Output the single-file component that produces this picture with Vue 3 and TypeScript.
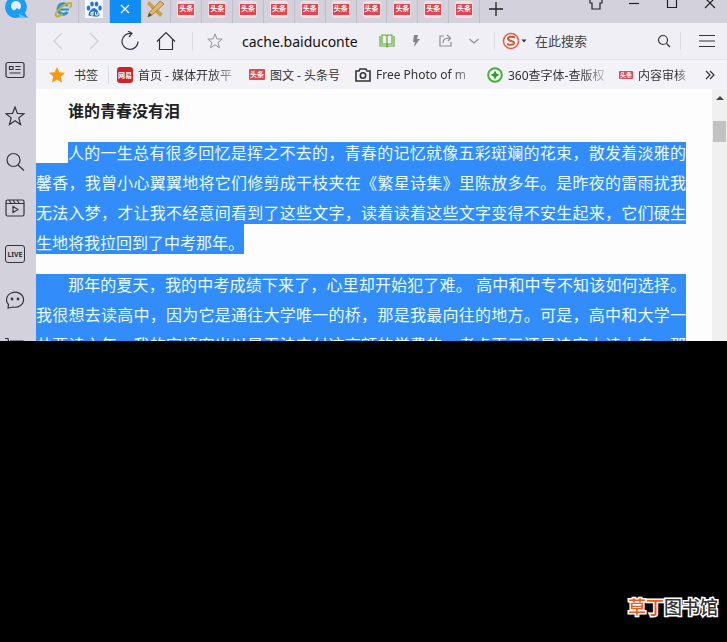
<script setup lang="ts">
import { ref } from 'vue'

interface Bookmark {
  icon: 'netease' | 'toutiao' | 'camera' | 'green' | 'small'
  label: string
  size: string
}

const address = ref('cache.baiduconte')
const query = ref('')
const newsTabs = 10

const bookmarks: Bookmark[] = [
  { icon: 'netease', label: '首页 - 媒体开放平', size: 'wide' },
  { icon: 'toutiao', label: '图文 - 头条号', size: 'short' },
  { icon: 'camera', label: 'Free Photo of m', size: 'wide' },
  { icon: 'green', label: '360查字体-查版权', size: 'wide' },
  { icon: 'small', label: '内容审核', size: 'tiny' },
]
</script>

<template>
  <div class="page">
    <div class="browser">
      <aside class="side">
        <a class="logo" href="#" aria-label="QQ">
          <svg width="28" height="26" viewBox="0 0 28 26">
            <path d="M14 2a11 11 0 1 0 3 21.600L26 24l-3-5A11 11 0 0 0 14 2z" fill="#1b9df0" />
            <path d="M17 19c2 2 5 4 9 5l-8 0z" fill="#64c8ff" />
            <circle cx="14" cy="12" r="5" fill="#e4edf6" />
            <path d="M15 14l4 3-3 2-4-2z" fill="#1b9df0" />
          </svg>
        </a>
        <nav class="side-nav">
          <button aria-label="新闻">
            <svg viewBox="0 0 20 20"><rect x="1" y="2.500" width="18" height="15" rx="2" /><path d="M4.500 6.500h3.500v3h-3.500zM10.500 6.500h5M10.500 9.500h5M4.500 13h11" /></svg>
          </button>
          <button aria-label="收藏">
            <svg viewBox="0 0 20 20"><path d="M10 1l2.400 6.400 6.600.300-5.200 4.200 1.800 6.600L10 14.700l-5.600 3.800 1.800-6.600L1 7.700l6.600-.300z" /></svg>
          </button>
          <button aria-label="搜索">
            <svg viewBox="0 0 20 20"><circle cx="8.500" cy="8" r="6.500" /><path d="M13 13l6 5.500" /></svg>
          </button>
          <button aria-label="视频">
            <svg viewBox="0 0 20 20"><rect x="1" y="2" width="18" height="16" rx="1.500" /><path d="M1 5.500h18M4 2l2 3M8 2l2 3M12 2l2 3M8 8.500v6l5-3z" /></svg>
          </button>
          <button class="live">LIVE</button>
          <button aria-label="消息">
            <svg viewBox="0 0 20 20"><path d="M3 18l.500-3.500A8.500 7.500 0 1 1 8 17z" /><circle cx="7" cy="9" r=".8" /><circle cx="13" cy="9" r=".8" /></svg>
          </button>
          <button aria-label="购物">
            <svg viewBox="0 0 20 20"><path d="M0 2.500h3l2 10h12M5 5h13l-1.500 7" /></svg>
          </button>
        </nav>
      </aside>

      <div class="main">
        <header class="tabs">
          <div class="tab-list">
            <button class="tab" aria-label="Internet Explorer">
              <svg width="18" height="18" viewBox="0 0 18 18">
                <path d="M13.500 6a5.200 5.200 0 1 0 0 6" fill="none" stroke="#2c93c9" stroke-width="3" />
                <path d="M5 9.500h10" stroke="#2c93c9" stroke-width="2" />
                <path d="M2 16c-2-3 9-14 15-13 1 1 0 3-1 5M2 16c2 1 5-1 6-2" fill="none" stroke="#c3b03c" stroke-width="2" />
              </svg>
            </button>
            <button class="tab" aria-label="百度">
              <svg width="18" height="18" viewBox="0 0 18 18">
                <rect width="18" height="18" fill="#f4f8ff" />
                <g fill="#2672d8"><ellipse cx="3.500" cy="8" rx="1.800" ry="2.500" /><ellipse cx="7" cy="4" rx="1.800" ry="2.500" /><ellipse cx="11.500" cy="4" rx="1.800" ry="2.500" /><ellipse cx="15" cy="8" rx="1.800" ry="2.500" /><path d="M9 8c2 0 5 4 5.500 6s-1 3-5.500 2.500S3 16 3.500 14 7 8 9 8z" /></g>
                <path d="M8 11v4H6v-2.500h2M10.500 12v3H13v-3" fill="none" stroke="#fff" />
              </svg>
            </button>
            <button class="tab active" aria-label="关闭标签">
              <svg width="10" height="10" viewBox="0 0 10 10"><path d="M1 1l8 8M9 1L1 9" stroke="#fff" stroke-width="1.300" /></svg>
            </button>
            <button class="tab" aria-label="工具">
              <svg width="18" height="18" viewBox="0 0 18 18">
                <path d="M2 1l14 13-3 3L0 4z" fill="#c9a14a" /><path d="M13 1l4 3L5 15l-4 2 1-4z" fill="#ddb867" stroke="#a58450" /><path d="M1 17l1-4 3 2z" fill="#514739" />
              </svg>
            </button>
            <button v-for="n in newsTabs" :key="n" class="tab"><span class="tt">头条</span></button>
          </div>
          <button class="new-tab" aria-label="新标签">
            <svg width="14" height="14" viewBox="0 0 14 14"><path d="M7 0v14M0 7h14" stroke="#222" stroke-width="1.300" /></svg>
          </button>
          <div class="window-controls">
            <button aria-label="皮肤"><svg viewBox="0 0 14 14"><path d="M4 1L1 3v4h2v6h8V7h2V3l-3-2c-1 3-5 3-6 0z" /></svg></button>
            <button aria-label="最小化"><svg viewBox="0 0 14 14"><path d="M2 7.500h10" /></svg></button>
            <button aria-label="最大化"><svg viewBox="0 0 14 14"><path d="M2.500 2.500h9v9h-9z" /></svg></button>
            <button aria-label="关闭"><svg viewBox="0 0 14 14"><path d="M2 2l10 10M12 2L2 12" /></svg></button>
          </div>
        </header>

        <div class="toolbar">
          <div class="nav-buttons">
            <button class="faint" aria-label="后退"><svg viewBox="0 0 20 20"><path d="M14 2L6 10l8 8" /></svg></button>
            <button class="faint" aria-label="前进"><svg viewBox="0 0 20 20"><path d="M6 2l8 8-8 8" /></svg></button>
            <button aria-label="刷新"><svg viewBox="0 0 20 20"><path d="M11 2.500a8 8 0 1 0 7 8M8 0l4 2.500L9 6" /></svg></button>
            <button aria-label="主页"><svg viewBox="0 0 20 20"><path d="M1 10.500L10 1.500l9 9M3.500 8.500v10h13v-10" /></svg></button>
          </div>
          <form class="address" @submit.prevent>
            <button class="grey" aria-label="收藏本页"><svg class="small" viewBox="0 0 20 20"><path d="M10 1l2.400 6.400 6.600.300-5.200 4.200 1.800 6.600L10 14.700l-5.600 3.800 1.800-6.600L1 7.700l6.600-.300z" /></svg></button>
            <input v-model="address" class="url" aria-label="地址" />
            <div class="actions">
              <button class="book" aria-label="阅读"><svg class="small" viewBox="0 0 16 16"><path d="M8 3v11M1 3v10h6l1 1 1-1h6V3M3 2h4l1 1 1-1h4v9H9l-1 1-1-1H3z" /></svg></button>
              <button class="bolt" aria-label="加速"><svg class="small" viewBox="0 0 16 16"><path d="M6 2h4L9 6h3L6 14l1-5H5z" /></svg></button>
              <button class="grey" aria-label="分享"><svg class="small" viewBox="0 0 16 16"><path d="M7 3H3v10h11V9M6 10c0-4 2-5 7-5M10 2l3.500 3L11 8" /></svg></button>
              <button class="grey" aria-label="展开"><svg class="small" viewBox="0 0 16 16"><path d="M3.500 6L8 10l4.500-4" /></svg></button>
            </div>
          </form>
          <form class="search" role="search" @submit.prevent>
            <button class="engine" aria-label="搜索引擎">
              <svg width="26" height="18" viewBox="0 0 26 18"><circle cx="9" cy="9" r="7.500" fill="#fff" stroke="#e95d42" stroke-width="1.600" /><path d="M13 5.500C10 4 5.500 4.500 6 7s6.500 1.500 6 4.200c-.500 2-4 2-7 .8" fill="none" stroke="#e94f32" stroke-width="2" /><path d="M19.500 7.500h5L22 10.500z" fill="#333" /></svg>
            </button>
            <input v-model="query" class="query" placeholder="在此搜索" aria-label="搜索内容" />
            <button class="dark" aria-label="搜索"><svg width="14" height="14" viewBox="0 0 14 14"><circle cx="6" cy="6" r="4.500" /><path d="M9.500 9.500L13 13" /></svg></button>
          </form>
          <button class="menu" aria-label="菜单"><svg width="18" height="14" viewBox="0 0 18 14"><path d="M1 1.500h16M1 7h16M1 12.500h16" /></svg></button>
        </div>

        <nav class="bookmarks">
          <a class="mark first" href="#">
            <svg width="16" height="16" viewBox="0 0 20 20"><path d="M10 0l3 6.500 7 .8-5.200 4.700 1.500 7.500L10 15.800l-6.300 3.700L5.200 12 0 7.300l7-.8z" fill="#f99a10" /></svg>
            <span>书签</span>
          </a>
          <a v-for="b in bookmarks" :key="b.label" class="mark" :class="b.size" href="#">
            <b v-if="b.icon === 'netease'" class="netease">网易</b>
            <b v-else-if="b.icon === 'toutiao'" class="tt flat">头条</b>
            <svg v-else-if="b.icon === 'camera'" width="16" height="16" viewBox="0 0 16 16"><path d="M1 4h3l1-2h6l1 2h3v10H1z" fill="none" stroke="#333" stroke-width="1.600" /><circle cx="8" cy="8.500" r="2.700" fill="none" stroke="#333" stroke-width="1.600" /></svg>
            <svg v-else-if="b.icon === 'green'" width="16" height="16" viewBox="0 0 16 16"><circle cx="8" cy="8" r="6.800" fill="#f7fff4" stroke="#48ae3c" stroke-width="2" /><path d="M8 3.500L9.500 6.500l3 1.500-3 1.500L8 12.500 6.500 9.500l-3-1.500 3-1.500z" fill="#2c9d2c" /></svg>
            <b v-else class="tt mini">头条</b>
            <span>{{ b.label }}</span>
          </a>
          <button class="more" aria-label="更多书签"><svg width="10" height="10" viewBox="0 0 10 10"><path d="M1 1l4 4-4 4M5 1l4 4-4 4" /></svg></button>
        </nav>

        <div class="viewport">
          <article class="article">
            <h1>谁的青春没有泪</h1>
            <p><span class="selected">人的一生总有很多回忆是挥之不去的，青春的记忆就像五彩斑斓的花束，散发着淡雅的馨香，我曾小心翼翼地将它们修剪成干枝夹在《繁星诗集》里陈放多年。是昨夜的雷雨扰我无法入梦，才让我不经意间看到了这些文字，读着读着这些文字变得不安生起来，它们硬生生地将我拉回到了中考那年。</span></p>
            <p class="filled"><span class="selected">那年的夏天，我的中考成绩下来了，心里却开始犯了难。 高中和中专不知该如何选择。我很想去读高中，因为它是通往大学唯一的桥，那是我最向往的地方。可是，高中和大学一共要读六年，我的家境窘出以是无法支付这高额的学费的，考虑再三还是决定上读大专，那时</span></p>
          </article>
          <div class="scrollbar"><i class="arrow"></i><i class="thumb"></i></div>
        </div>
      </div>
    </div>

    <footer class="stage">
      <div class="brand"><span>草丁</span>图书馆</div>
    </footer>
  </div>
</template>

<style>
body {
  margin: 0;
  background: #000;
}
</style>

<style scoped>
.page {
  display: grid;
  grid-template-rows: minmax(0, 341fr) minmax(0, 301fr);
  height: 100vh;
  overflow: hidden;
  background: #000;
  font-family: "Noto Sans", "Noto Sans CJK SC", sans-serif;
  color: #222;
}
button {
  display: flex;
  align-items: center;
  justify-content: center;
  flex: none;
  padding: 0;
  border: 0;
  background: none;
  color: #333;
  font-family: inherit;
}
input {
  min-width: 0;
  padding: 0;
  border: 0;
  outline: 0;
  background: none;
  font-family: inherit;
}
svg {
  flex: none;
}
.browser {
  min-width: 0;
  display: flex;
  overflow: hidden;
  background: #d3d2dc;
}
.side {
  flex: none;
  width: 36px;
}
.logo {
  display: block;
  height: 20px;
  overflow: hidden;
  padding-left: 2px;
}
.logo svg {
  display: block;
  margin-top: -6px;
}
.side-nav {
  display: flex;
  flex-direction: column;
  gap: 26px;
  padding: 40px 0 0 5px;
}
.side-nav button {
  width: 20px;
  height: 20px;
}
.side-nav svg,
.nav-buttons svg {
  width: 20px;
  height: 20px;
  fill: none;
  stroke: #34333d;
  stroke-width: 1.2;
}
.side-nav .live {
  height: 18px;
  margin: 1px 0;
  border: 1px solid #34333d;
  border-radius: 3px;
  font-size: 7px;
  font-weight: 700;
}
.main {
  flex: 1;
  min-width: 0;
  display: flex;
  flex-direction: column;
}
.tabs {
  flex: none;
  height: 23px;
  display: flex;
  padding-left: 12px;
}
.tab-list {
  flex: 0 1 432px;
  display: flex;
}
.tab {
  flex: 1;
  height: 23px;
  padding-bottom: 5px;
  border-right: 1px solid #bfbec8;
}
.tab.active {
  background: #0f8cf5;
  border-color: #0f8cf5;
}
.tt {
  display: flex;
  align-items: center;
  justify-content: center;
  width: 16px;
  height: 11px;
  border: 1px solid #f3dfe3;
  border-width: 3px 1px;
  border-radius: 3px;
  background: #e5454f;
  background-clip: padding-box;
  color: #fff;
  font-size: 7px;
  line-height: 10px;
  font-weight: 700;
  white-space: nowrap;
}
.tt.flat {
  border: 0;
  border-radius: 1px;
}
.tt.mini {
  width: 14px;
  height: 8px;
  border: 0;
  border-radius: 1px;
  font-size: 6px;
}
.new-tab {
  width: 32px;
  height: 17px;
}
.window-controls {
  margin-left: auto;
  display: flex;
  gap: 24px;
  padding-right: 10px;
}
.window-controls button {
  width: 14px;
  height: 14px;
  margin-top: -4px;
}
.window-controls svg {
  width: 14px;
  height: 14px;
  fill: none;
  stroke: #222;
  stroke-width: 1.2;
}
.toolbar {
  flex: none;
  height: 36px;
  display: flex;
  align-items: center;
  background: #f0eff5;
  border-bottom: 1px solid #e3e2ea;
}
.nav-buttons {
  display: flex;
  gap: 16px;
  padding: 0 16px 0 12px;
}
.nav-buttons .faint svg {
  stroke: #cfced6;
}
.address {
  flex: 1;
  min-width: 0;
  display: flex;
  align-items: center;
  border-left: 1px solid #dddce4;
}
.address .grey {
  color: #8f8e98;
}
.address > button {
  padding: 0 19px 0 14px;
}
.small {
  width: 16px;
  height: 16px;
  fill: none;
  stroke: currentColor;
  stroke-width: 1.2;
}
.url {
  flex: 1;
  font-size: 14px;
  color: #111;
}
.actions {
  display: flex;
  gap: 13px;
  padding: 0 12px 0 10px;
}
.book {
  color: #5cae2c;
}
.bolt {
  color: #85848d;
}
.bolt svg {
  fill: currentColor;
  stroke: none;
}
.search {
  display: flex;
  align-items: center;
  width: 178px;
  padding-left: 7px;
  border-left: 1px solid #dddce4;
  border-right: 1px solid #dddce4;
}
.query {
  flex: 1;
  margin-left: 7px;
  font-size: 13px;
  color: #333;
}
.query::placeholder {
  color: #444;
  opacity: 1;
}
.search .dark {
  padding-right: 9px;
}
.dark svg,
.menu svg,
.more svg {
  fill: none;
  stroke: #333;
  stroke-width: 1.2;
}
.menu {
  width: 46px;
  padding-left: 6px;
}
.bookmarks {
  flex: none;
  height: 29px;
  display: flex;
  align-items: center;
  gap: 12px;
  padding-left: 13px;
  background: #f3f2f7;
}
.mark {
  display: flex;
  align-items: center;
  gap: 5px;
  flex: none;
  color: #333;
  font-size: 12px;
  text-decoration: none;
}
.mark span {
  flex: 1;
  min-width: 0;
  white-space: nowrap;
}
.mark.first {
  gap: 9px;
  width: 59px;
  margin-right: -4px;
  border-right: 1px solid #dddce4;
}
.mark.wide {
  width: 120px;
}
.mark.wide span,
.mark.tiny span {
  mask-image: linear-gradient(90deg, #000 75%, #0003);
}
.mark.short {
  width: 94px;
}
.mark.tiny {
  width: 70px;
}
.netease {
  display: flex;
  align-items: center;
  justify-content: center;
  width: 16px;
  height: 16px;
  border-radius: 3px;
  background: #cf2429;
  color: #fff;
  font-size: 7px;
  white-space: nowrap;
}
.more {
  margin-left: auto;
  padding-right: 12px;
}
.viewport {
  flex: 1;
  min-height: 0;
  display: flex;
  background: #fdfdfe;
}
.article {
  flex: 1;
  min-width: 0;
  overflow: hidden;
  padding: 7px 26px 0 0;
  font-size: 16px;
  line-height: 30px;
}
.article h1 {
  margin: 0;
  font-size: 16px;
  font-weight: 700;
  text-indent: 32px;
}
.article p {
  margin: 12px 0 0;
  text-indent: 32px;
  text-align: justify;
  clip-path: inset(4px 0 0 0);
  color: #e8fcff;
}
.selected {
  padding-top: 9px;
  background: #328dfb;
}
.filled {
  background: #328dfb;
}
.scrollbar {
  flex: none;
  width: 15px;
  display: flex;
  flex-direction: column;
  align-items: center;
  background: #f0f0f1;
}
.arrow {
  margin-top: 7px;
  border: 4px solid transparent;
  border-top: 0;
  border-bottom: 4px solid #444;
}
.thumb {
  width: 13px;
  height: 21px;
  margin-top: 21px;
  background: #c2c2c3;
}
.stage {
  display: flex;
  align-items: flex-end;
  justify-content: flex-end;
  padding: 0 9px 22px 0;
}
.brand {
  color: #333;
  font-size: 18px;
  line-height: 26px;
  font-weight: 500;
  -webkit-text-stroke: 3px #fff;
  paint-order: stroke fill;
}
.brand span {
  color: #ee5b20;
}
</style>
